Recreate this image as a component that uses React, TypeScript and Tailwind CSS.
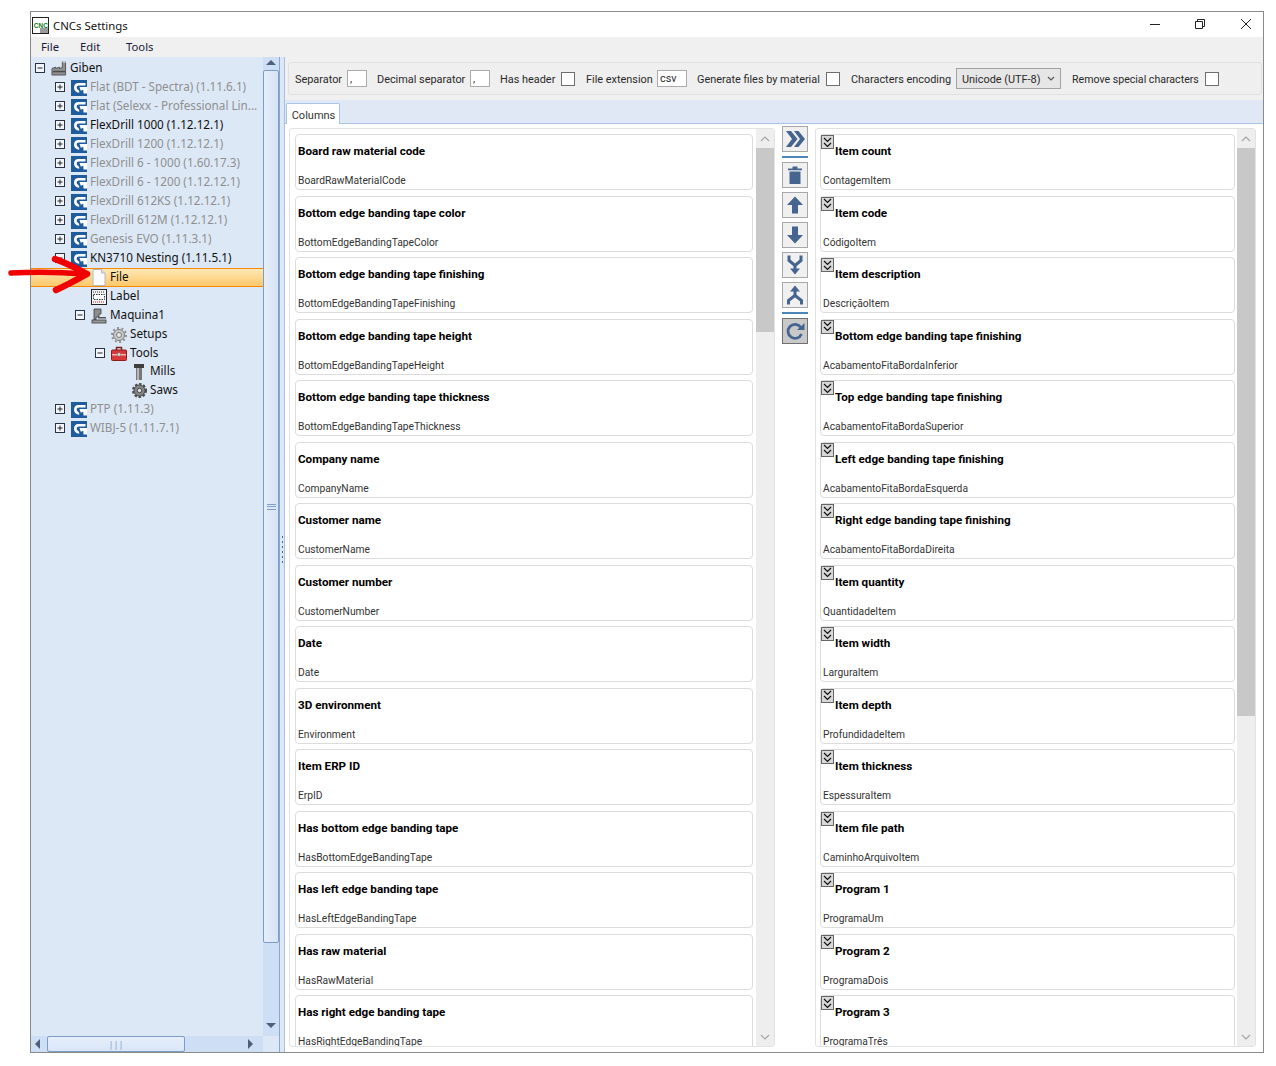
import React from 'react';

const FONT = '"Noto Sans", "Open Sans", sans-serif';
const CONTENT_FONT = 'Roboto, "Noto Sans", sans-serif';

const LEFT_COLUMNS = [
  ['Board raw material code', 'BoardRawMaterialCode'],
  ['Bottom edge banding tape color', 'BottomEdgeBandingTapeColor'],
  ['Bottom edge banding tape finishing', 'BottomEdgeBandingTapeFinishing'],
  ['Bottom edge banding tape height', 'BottomEdgeBandingTapeHeight'],
  ['Bottom edge banding tape thickness', 'BottomEdgeBandingTapeThickness'],
  ['Company name', 'CompanyName'],
  ['Customer name', 'CustomerName'],
  ['Customer number', 'CustomerNumber'],
  ['Date', 'Date'],
  ['3D environment', 'Environment'],
  ['Item ERP ID', 'ErpID'],
  ['Has bottom edge banding tape', 'HasBottomEdgeBandingTape'],
  ['Has left edge banding tape', 'HasLeftEdgeBandingTape'],
  ['Has raw material', 'HasRawMaterial'],
  ['Has right edge banding tape', 'HasRightEdgeBandingTape'],
];

const RIGHT_COLUMNS = [
  ['Item count', 'ContagemItem'],
  ['Item code', 'CódigoItem'],
  ['Item description', 'DescriçãoItem'],
  ['Bottom edge banding tape finishing', 'AcabamentoFitaBordaInferior'],
  ['Top edge banding tape finishing', 'AcabamentoFitaBordaSuperior'],
  ['Left edge banding tape finishing', 'AcabamentoFitaBordaEsquerda'],
  ['Right edge banding tape finishing', 'AcabamentoFitaBordaDireita'],
  ['Item quantity', 'QuantidadeItem'],
  ['Item width', 'LarguraItem'],
  ['Item depth', 'ProfundidadeItem'],
  ['Item thickness', 'EspessuraItem'],
  ['Item file path', 'CaminhoArquivoItem'],
  ['Program 1', 'ProgramaUm'],
  ['Program 2', 'ProgramaDois'],
  ['Program 3', 'ProgramaTrês'],
];

type IconName = 'factory' | 'g' | 'file' | 'label' | 'machine' | 'gear' | 'toolbox' | 'mill' | 'saw';

interface TreeRow {
  text: string;
  depth: number;
  icon: IconName;
  box?: '+' | '-';
  muted?: boolean;
  selected?: boolean;
  short?: boolean;
}

const TREE: TreeRow[] = [
  { text: 'Giben', depth: 0, icon: 'factory', box: '-' },
  { text: 'Flat (BDT - Spectra) (1.11.6.1)', depth: 1, icon: 'g', box: '+', muted: true },
  { text: 'Flat (Selexx - Professional Lin...', depth: 1, icon: 'g', box: '+', muted: true },
  { text: 'FlexDrill 1000 (1.12.12.1)', depth: 1, icon: 'g', box: '+' },
  { text: 'FlexDrill 1200 (1.12.12.1)', depth: 1, icon: 'g', box: '+', muted: true },
  { text: 'FlexDrill 6 - 1000 (1.60.17.3)', depth: 1, icon: 'g', box: '+', muted: true },
  { text: 'FlexDrill 6 - 1200 (1.12.12.1)', depth: 1, icon: 'g', box: '+', muted: true },
  { text: 'FlexDrill 612KS (1.12.12.1)', depth: 1, icon: 'g', box: '+', muted: true },
  { text: 'FlexDrill 612M (1.12.12.1)', depth: 1, icon: 'g', box: '+', muted: true },
  { text: 'Genesis EVO (1.11.3.1)', depth: 1, icon: 'g', box: '+', muted: true },
  { text: 'KN3710 Nesting (1.11.5.1)', depth: 1, icon: 'g', box: '-' },
  { text: 'File', depth: 2, icon: 'file', selected: true },
  { text: 'Label', depth: 2, icon: 'label' },
  { text: 'Maquina1', depth: 2, icon: 'machine', box: '-' },
  { text: 'Setups', depth: 3, icon: 'gear' },
  { text: 'Tools', depth: 3, icon: 'toolbox', box: '-' },
  { text: 'Mills', depth: 4, icon: 'mill', short: true },
  { text: 'Saws', depth: 4, icon: 'saw' },
  { text: 'PTP (1.11.3)', depth: 1, icon: 'g', box: '+', muted: true },
  { text: 'WIBJ-5 (1.11.7.1)', depth: 1, icon: 'g', box: '+', muted: true },
];

const TreeIcon = ({ name }: { name: IconName }) => {
  switch (name) {
    case 'g':
      return (
        <svg width="16" height="16" viewBox="0 0 16 16">
          <rect width="16" height="16" fill="#1f5c9e" />
          <path d="M14.500 3H7.500C4.500 3 3 5 3 7.500c0 2.800 1.800 4.700 4.500 5.200l1-.4-1-2.300C6.300 9.500 5.700 8.700 5.700 7.600 5.700 6.300 6.500 5.500 8 5.500h6.500z" fill="#fff" />
          <path d="M8.500 7H16v6.500h-3.500l-.2-3.800-2.500 1z" fill="#fff" />
        </svg>
      );
    case 'factory':
      return (
        <svg width="17" height="17" viewBox="0 0 17 17">
          <path d="M1 8.500 5 7v1.500L9 7v1.500l3-1V1.500h3.500V15.500H1z" fill="#8f8f8f" stroke="#3d3d3d" strokeWidth="0.8" />
          <rect x="2" y="11" width="13" height="1.500" fill="#4a4a4a" />
          <rect x="12.500" y="1" width="3" height="1.500" fill="#d8d8d8" />
        </svg>
      );
    case 'file':
      return (
        <svg width="16" height="17" viewBox="0 0 16 17">
          <path d="M2 .5h8.500L14 4v12.500H2z" fill="#fbfbfb" stroke="#b9b9b9" />
          <path d="M10.500.5V4H14" fill="#e3e3e3" stroke="#b9b9b9" />
        </svg>
      );
    case 'label':
      return (
        <svg width="16" height="16" viewBox="0 0 16 16">
          <rect x=".5" y=".5" width="15" height="15" fill="#f4f4f4" stroke="#222" />
          <path d="M2 3h12" stroke="#333" strokeDasharray="1 1" />
          <rect x="2.500" y="5.500" width="11" height="5" fill="#fff" stroke="#333" strokeDasharray="1.500 1" />
          <path d="M2 13h12" stroke="#d02020" strokeDasharray="1 1" />
        </svg>
      );
    case 'machine':
      return (
        <svg width="16" height="16" viewBox="0 0 16 16">
          <path d="M3 1h7v5H8v3H5v3H3z" fill="#8d8d8d" stroke="#3c3c3c" strokeWidth="0.8" />
          <rect x="1" y="12" width="14" height="3" fill="#9a9a9a" stroke="#3c3c3c" strokeWidth="0.8" />
          <rect x="7" y="9" width="8" height="1.500" fill="#555" />
        </svg>
      );
    case 'gear':
      return (
        <svg width="16" height="16" viewBox="0 0 16 16">
          <circle cx="8" cy="8" r="5.500" fill="#c9c9c9" stroke="#7c7c7c" />
          <circle cx="8" cy="8" r="7" fill="none" stroke="#8e8e8e" strokeWidth="2" strokeDasharray="2 2.400" />
          <circle cx="8" cy="8" r="2.500" fill="#e6e6e6" stroke="#7c7c7c" />
        </svg>
      );
    case 'toolbox':
      return (
        <svg width="16" height="15" viewBox="0 0 16 15">
          <path d="M5.500 4V1.500h5V4" fill="none" stroke="#7a2020" strokeWidth="1.500" />
          <rect x=".5" y="4" width="15" height="10.500" rx="1" fill="#d8383a" stroke="#8a1c1c" />
          <rect x="1" y="8" width="14" height="1.500" fill="#f4b4b4" />
          <rect x="6.500" y="7" width="3" height="3" fill="#e8e0d0" stroke="#777" strokeWidth="0.6" />
        </svg>
      );
    case 'mill':
      return (
        <svg width="10" height="16" viewBox="0 0 10 16">
          <rect x="0" y="0" width="10" height="4" fill="#3e3e3e" />
          <rect x="2" y="4" width="6" height="12" fill="#777" />
          <rect x="3" y="4" width="2" height="12" fill="#b8b8b8" />
        </svg>
      );
    case 'saw':
      return (
        <svg width="15" height="15" viewBox="0 0 15 15">
          <circle cx="7.500" cy="7.500" r="5.500" fill="#858585" stroke="#444" />
          <circle cx="7.500" cy="7.500" r="6.500" fill="none" stroke="#4a4a4a" strokeWidth="2" strokeDasharray="2.500 1.700" />
          <circle cx="7.500" cy="7.500" r="2.200" fill="#e2e2e2" stroke="#444" />
        </svg>
      );
  }
};

const ExpandBox = ({ kind }: { kind: '+' | '-' }) => (
  <svg width="10" height="10" viewBox="0 0 10 10" className="mb-[1px] block">
    <rect x=".5" y=".5" width="9" height="9" fill="#f2f6fb" stroke="#2a3140" />
    <path d="M2.500 5h5" stroke="#222" />
    {kind === '+' && <path d="M5 2.500v5" stroke="#222" />}
  </svg>
);

const TreeItem = ({ row }: { row: TreeRow }) => (
  <div
    className={`flex items-center ${row.short ? 'h-[18px]' : 'h-[19px]'} ${row.selected ? 'border-y border-[#f58a00] bg-gradient-to-b from-[#fde8b4] to-[#fdc86a]' : ''}`}
    style={{ paddingLeft: 4 + row.depth * 20 }}
  >
    <div className="flex w-[16px] shrink-0 items-center">{row.box && <ExpandBox kind={row.box} />}</div>
    <div className="flex w-[19px] shrink-0 items-center justify-center pr-[3px]">
      <TreeIcon name={row.icon} />
    </div>
    <span className={`mb-[2px] whitespace-nowrap text-[11.7px] leading-none ${row.muted ? 'text-[#8f8f8f]' : 'text-[#101010]'}`}>
      {row.text}
    </span>
  </div>
);

const Triangle = ({ dir }: { dir: 'up' | 'down' | 'left' | 'right' }) => {
  const points = { up: '0,6 5,1 10,6', down: '0,1 10,1 5,6', left: '6,0 6,10 1,5', right: '2,0 2,10 7,5' }[dir];
  return (
    <svg width="10" height="10" viewBox="0 0 10 10" className="block">
      <polygon points={points} fill="#4d5f7a" />
    </svg>
  );
};

const Chevron = ({ up }: { up?: boolean }) => (
  <svg width="10" height="6" viewBox="0 0 10 6" className="block">
    <path d={up ? 'M1 5l4-4 4 4' : 'M1 1l4 4 4-4'} fill="none" stroke="#a5a5a5" strokeWidth="1.200" />
  </svg>
);

const ListScrollbar = ({ thumb }: { thumb: number }) => (
  <div className="flex h-full w-[18px] shrink-0 flex-col items-center bg-[#eeeeee]">
    <div className="flex h-[19px] w-full items-center justify-center">
      <Chevron up />
    </div>
    <div className="w-full bg-[#c8c8c8]" style={{ height: thumb }} />
    <div className="flex-1" />
    <div className="flex h-[19px] w-full items-center justify-center">
      <Chevron />
    </div>
  </div>
);

const ColumnCard = ({ title, field, toggle }: { title: string; field: string; toggle?: boolean }) => (
  <div className="relative h-[56px] shrink-0 rounded-[4px] border border-[#dcdcdc] bg-white pl-[2px] pt-[8px]">
    {toggle && (
      <div className="absolute left-[0px] top-[0px] flex h-[14px] w-[13px] items-center justify-center border border-[#666] bg-[#d8d8d8]">
        <svg width="9" height="11" viewBox="0 0 9 11">
          <path d="M1 1l3.500 3.500L8 1M1 6l3.500 3.500L8 6" fill="none" stroke="#111" strokeWidth="1.200" />
        </svg>
      </div>
    )}
    <div className={`h-[17px] text-[11.65px] font-bold leading-[17px] text-black ${toggle ? 'pl-[12px]' : ''}`}>{title}</div>
    <div className="mt-[13px] text-[10.25px] leading-[16px] text-[#333]">{field}</div>
  </div>
);

const ColumnList = ({ items, toggle, thumb, cardWidth, left }: { items: string[][]; toggle?: boolean; thumb: number; cardWidth: string; left: string }) => (
  <div className="flex h-full overflow-hidden rounded-[3px] border border-[#e2e2e2] bg-white">
    <div className={`flex h-full flex-col gap-[5.5px] overflow-hidden pt-[5px] ${left} ${cardWidth}`} style={{ fontFamily: CONTENT_FONT }}>
      {items.map(([title, field]) => (
        <ColumnCard key={field} title={title} field={field} toggle={toggle} />
      ))}
    </div>
    <div className="flex-1" />
    <ListScrollbar thumb={thumb} />
  </div>
);

const ToolButton = ({ children, active }: { children: React.ReactNode; active?: boolean }) => (
  <div className={`flex h-[26px] w-[26px] items-center justify-center border ${active ? 'border-[#707070] bg-[#c9c9c9]' : 'border-[#a8a8a8] bg-[#f0f0f0]'}`}>
    <svg width="22" height="22" viewBox="0 0 22 22" fill="#456590" stroke="#456590">
      {children}
    </svg>
  </div>
);

const Field = ({ label, value, labelW, boxW }: { label: string; value: string; labelW: string; boxW: string }) => (
  <>
    <span className={`whitespace-nowrap pt-[4px] ${labelW}`}>{label}</span>
    <span className={`flex h-[17px] items-center border border-[#ababab] bg-white pl-[2px] pt-[1px] text-[10.8px] leading-none ${boxW}`}>{value}</span>
  </>
);

const CheckBox = () => <span className="h-[14px] w-[14px] shrink-0 border border-[#6e6e6e] bg-white" />;

const App: React.FC = () => {
  return (
    <div className="relative h-[1066px] w-[1276px] bg-white pl-[30px] pt-[11px]" style={{ fontFamily: FONT }}>
      <div className="flex h-[1042px] w-[1234px] flex-col border border-[#8a8a8a] bg-white">
        {/* Title bar */}
        <div className="flex h-[25px] shrink-0 items-center">
          <svg width="17" height="17" viewBox="0 0 17 17" className="ml-[1px] mt-[1px]">
            <rect x=".5" y=".5" width="16" height="16" fill="#fff" stroke="#222" />
            <rect x="8" y="11" width="8" height="5" fill="#9a9a9a" />
            <text x="1.800" y="10.500" fontSize="6.500" fontWeight="700" fill="#0a7a20" fontFamily="Liberation Sans">CNC</text>
          </svg>
          <span className="ml-[4px] mt-[2px] text-[11.4px] text-[#111]">CNCs Settings</span>
          <div className="flex-1" />
          <svg width="112" height="16" viewBox="0 0 112 16" className="mb-[2px] mr-[1px]">
            <path d="M0 8.500h10" stroke="#222" />
            <path d="M45.500 5.500h7v7h-7zM47.500 5.500v-2h7v7h-2" fill="none" stroke="#222" />
            <path d="M91 3l10 10M101 3L91 13" stroke="#222" />
          </svg>
        </div>
        {/* Menu bar */}
        <div className="flex h-[20px] shrink-0 items-center bg-[#f0f0f0] pl-[10px] text-[11.3px] text-[#1a1a3a]">
          <span className="w-[39px]">File</span>
          <span className="w-[46px]">Edit</span>
          <span>Tools</span>
        </div>

        <div className="flex min-h-0 flex-1">
          {/* Tree */}
          <div className="flex w-[248px] shrink-0 flex-col bg-[#dde8f6]">
            <div className="flex min-h-0 flex-1">
              <div className="min-w-0 flex-1 overflow-hidden pt-[2px]">
                {TREE.map(row => (
                  <TreeItem key={row.text} row={row} />
                ))}
              </div>
              <div className="flex w-[16px] shrink-0 flex-col items-center bg-[#cedff5]">
                <div className="flex h-[13px] items-center justify-center">
                  <Triangle dir="up" />
                </div>
                <div className="flex h-[873px] w-full items-center justify-center rounded-[2px] border border-[#7d9cc6] bg-gradient-to-r from-[#e6eefa] to-[#d6e3f6]">
                  <div className="h-[6px] w-[9px] border-y border-[#7d9cc6] bg-[linear-gradient(#dde8f6_1px,#7d9cc6_1px,#7d9cc6_2px,#dde8f6_2px)]" />
                </div>
                <div className="flex-1" />
                <div className="flex h-[18px] items-center justify-center">
                  <Triangle dir="down" />
                </div>
              </div>
            </div>
            <div className="flex h-[16px] shrink-0 items-center bg-[#cedff5]">
              <div className="flex w-[16px] justify-center">
                <Triangle dir="left" />
              </div>
              <div className="flex h-full w-[138px] items-center justify-center rounded-[2px] border border-[#7d9cc6] bg-gradient-to-b from-[#e6eefa] to-[#d9e6f8] text-[9px] leading-none text-[#7d9cc6]">
                |||
              </div>
              <div className="flex-1" />
              <div className="flex w-[24px] justify-center">
                <Triangle dir="right" />
              </div>
              <div className="h-full w-[16px] bg-[#dde8f6]" />
            </div>
          </div>

          {/* Splitter */}
          <div className="flex w-[5px] shrink-0 items-center justify-center border-l border-[#8aa6cc] bg-[#dde8f6]">
            <div className="mt-[-10px] h-[28px] w-[1px] bg-[repeating-linear-gradient(#3a6ea8_0_2px,transparent_2px_5px)]" />
          </div>

          {/* Main area */}
          <div className="flex min-w-0 flex-1 flex-col border-l border-[#a9c0dc]">
            <div className="h-[43px] shrink-0 bg-[#f0f0f0] pl-[3px] pr-[1px] pt-[5px]">
              <div className="flex h-[33px] items-center rounded-[3px] border border-[#e0e0e0] bg-[#efefef] pl-[6px] text-[10.9px] text-[#2a2a2a]" style={{ fontFamily: CONTENT_FONT }}>
                <Field label="Separator" value="," labelW="w-[52px]" boxW="w-[20px]" />
                <span className="w-[10px]" />
                <Field label="Decimal separator" value="," labelW="w-[93px]" boxW="w-[20px]" />
                <span className="w-[10px]" />
                <span className="w-[61px] whitespace-nowrap pt-[4px]">Has header</span>
                <CheckBox />
                <span className="w-[11px]" />
                <Field label="File extension" value="csv" labelW="w-[71px]" boxW="w-[30px]" />
                <span className="w-[10px]" />
                <span className="w-[129px] whitespace-nowrap pt-[4px]">Generate files by material</span>
                <CheckBox />
                <span className="w-[11px]" />
                <span className="w-[105px] whitespace-nowrap pt-[4px]">Characters encoding</span>
                <div className="flex h-[21px] w-[105px] items-center justify-between border border-[#a3a3a3] bg-[#e6e6e6] px-[5px]">
                  <span className="whitespace-nowrap pt-[3px]">Unicode (UTF-8)</span>
                  <svg width="8" height="5" viewBox="0 0 8 5">
                    <path d="M1 1l3 3 3-3" fill="none" stroke="#555" strokeWidth="1.200" />
                  </svg>
                </div>
                <span className="w-[11px]" />
                <span className="w-[133px] whitespace-nowrap pt-[2px] text-[10.6px]">Remove special characters</span>
                <CheckBox />
              </div>
            </div>

            {/* Tab strip */}
            <div className="flex h-[24px] shrink-0 items-end border-b border-[#a9c4e4] bg-[#dfe8f4] pl-[1px]">
              <div className="mb-[-1px] flex h-[21px] w-[54px] items-center justify-center rounded-t-[2px] border border-b-0 border-[#a9c4e4] bg-white pl-[1px] pt-[5px] text-[11px] text-[#333]" style={{ fontFamily: CONTENT_FONT }}>
                Columns
              </div>
            </div>

            {/* Columns */}
            <div className="flex min-h-0 flex-1 bg-white pb-[5px] pl-[4px] pr-[6px] pt-[4px]">
              <div className="h-full w-[486px] shrink-0">
                <ColumnList items={LEFT_COLUMNS} thumb={184} cardWidth="w-[463px]" left="pl-[5px]" />
              </div>
              <div className="flex w-[40px] shrink-0 flex-col items-center pr-[1px]">
                <div className="mt-[-2px] flex w-[26px] flex-col gap-[4px]">
                  <ToolButton>
                    <path d="M2 3h5l6.500 8L7 19H2l6-8zM10 3h4.500l6.500 8-6.500 8H10l6-8z" stroke="none" />
                  </ToolButton>
                  <div className="h-[2px] w-[26px] bg-[#4a86b8]" />
                  <ToolButton>
                    <path d="M4 4.500h14v1.800H4zM8.500 2.500h5v2h-5zM5.500 7.500h11V20h-11z" stroke="none" />
                  </ToolButton>
                  <ToolButton>
                    <path d="M11 2.500l8 8.500h-5v8.500H8V11H3z" stroke="none" />
                  </ToolButton>
                  <ToolButton>
                    <path d="M11 19.500L19 11h-5V2.500H8V11H3z" stroke="none" />
                  </ToolButton>
                  <ToolButton>
                    <path d="M5 1.500v5l6 5 6-5v-5" fill="none" strokeWidth="3" />
                    <path d="M11 10v5" strokeWidth="3" />
                    <path d="M6 14.500h10L11 20.500z" stroke="none" />
                  </ToolButton>
                  <ToolButton>
                    <path d="M6 7.500h10L11 1.500z" stroke="none" />
                    <path d="M11 7v5" strokeWidth="3" />
                    <path d="M4.500 20.500v-4l6.500-5 6.500 5v4" fill="none" strokeWidth="3" />
                  </ToolButton>
                  <div className="h-[2px] w-[26px] bg-[#4a86b8]" />
                  <ToolButton active>
                    <path d="M17.500 14a7 7 0 1 1-.8-6.800" fill="none" strokeWidth="2.800" />
                    <path d="M13 10h7.500V3z" stroke="none" />
                  </ToolButton>
                </div>
              </div>
              <div className="h-full w-[441px] shrink-0">
                <ColumnList items={RIGHT_COLUMNS} toggle thumb={568} cardWidth="w-[419px]" left="pl-[4px]" />
              </div>
            </div>
          </div>
        </div>
      </div>

      {/* Red annotation arrow */}
      <svg width="100" height="50" viewBox="0 0 100 50" className="absolute left-0 top-[250px]">
        <path d="M11 23C35 21.500 60 22 86 24" fill="none" stroke="#f00000" strokeWidth="5.500" strokeLinecap="round" />
        <path d="M55 9C66 13 78 19 87 24C78 29 65 36 56 40" fill="none" stroke="#f00000" strokeWidth="6.500" strokeLinecap="round" strokeLinejoin="round" />
      </svg>
    </div>
  );
};

export default App;
